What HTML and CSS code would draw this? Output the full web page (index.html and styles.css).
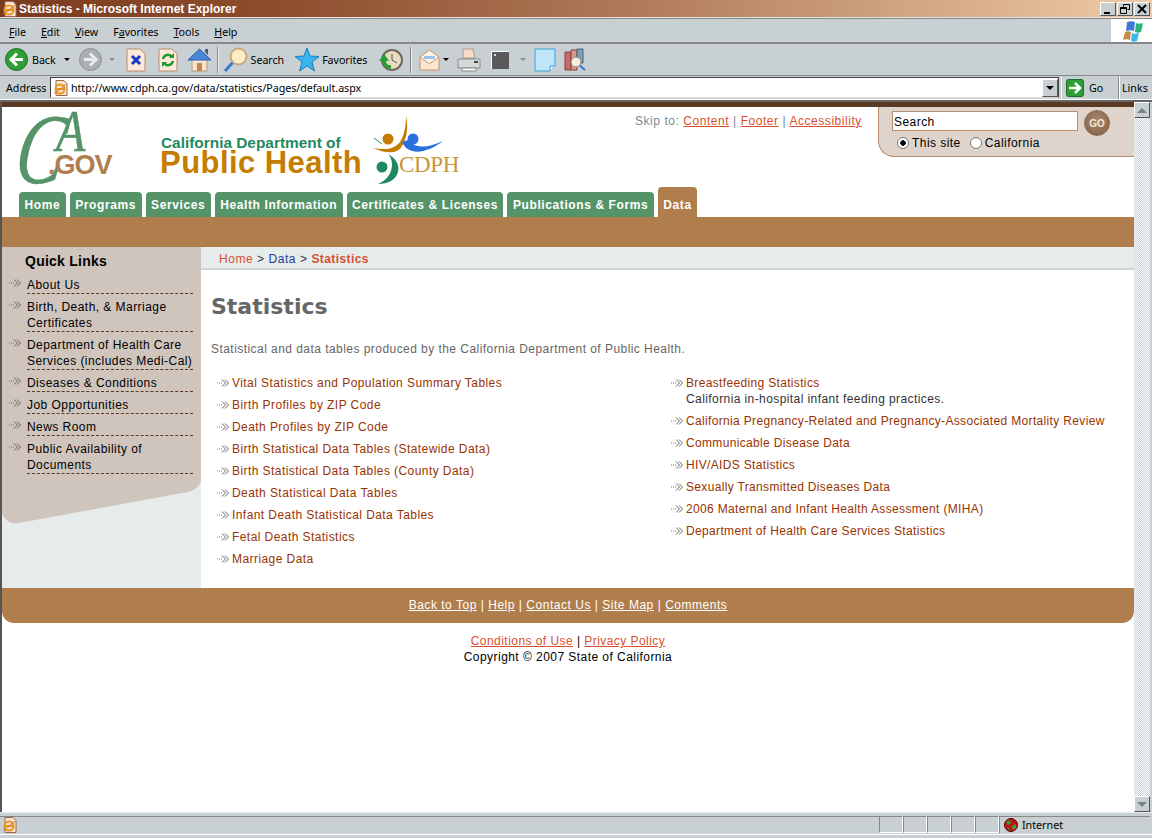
FILE: index.html
```html
<!DOCTYPE html>
<html lang="en">
<head>
  <meta charset="UTF-8" />
  <title>Statistics - Microsoft Internet Explorer</title>
  <link rel="stylesheet" href="styles.css">
</head>
<body>

  <svg class="defs" width="0" height="0">
    <symbol id="arr" viewBox="0 0 13 8">
      <path d="M0 4h1M2 4h1M4 4h1" stroke="#777" fill="none"/>
      <path d="M5 .5 8.500 4 5 7.500M8 .5 11.500 4 8 7.500" stroke="#666" fill="none"/>
    </symbol>
    <symbol id="ie" viewBox="0 0 16 16">
      <path d="M3 .5h8l3 3v12H3z" fill="#fbe3d3" stroke="#9a6a4a"/>
      <circle cx="7" cy="9" r="4.500" fill="none" stroke="#e8981e" stroke-width="2"/>
      <path d="M3 9h8" stroke="#e8981e" stroke-width="2"/>
      <path d="M1 13C4 12 10 7 13 4" stroke="#c9751a" fill="none"/>
    </symbol>
  </svg>

  <div class="titlebar">
    <svg width="16" height="16"><use href="#ie"/></svg>
    <span class="title-text">Statistics - Microsoft Internet Explorer</span>
    <div class="win-btns">
      <button class="win-btn"><svg width="10" height="10"><path d="M1 8h6v2H1z"/></svg></button>
      <button class="win-btn"><svg width="10" height="10"><path d="M3.500 2.500V.500h6v5h-2M.500 3.500h6v6h-6zM.500 4.500h6" fill="none" stroke="#000"/></svg></button>
      <button class="win-btn win-close"><svg width="10" height="10"><path d="M1 1l8 8M9 1l-8 8" stroke="#000" stroke-width="2"/></svg></button>
    </div>
  </div>

  <div class="menubar">
    <div class="menu-items">
      <span><u>F</u>ile</span>
      <span><u>E</u>dit</span>
      <span><u>V</u>iew</span>
      <span>F<u>a</u>vorites</span>
      <span><u>T</u>ools</span>
      <span><u>H</u>elp</span>
    </div>
    <div class="flag">
      <svg width="22" height="22" viewBox="0 0 22 22">
        <path d="M6 2C9 1 11 1 14 2L13 11C10 10 8 10 5 11z" fill="#3f78d8"/>
        <path d="M15 3C17 4 19 4 22 3L20 12C18 13 16 13 14 12z" fill="#2fb27a"/>
        <path d="M4 12C6 11 8 11 10 12L9 20C7 19 4 19 2 20z" fill="#c98a4a"/>
        <path d="M11 13C13 14 15 14 18 13L16 21C14 22 12 22 10 21z" fill="#37b8e8"/>
      </svg>
    </div>
  </div>

  <div class="toolbar">
    <svg class="ml5" width="23" height="23" viewBox="0 0 23 23">
      <circle cx="11.500" cy="11.500" r="11" fill="#2f9e35" stroke="#1c6f24"/>
      <path d="M18 11.500H7M12 5.500l-6 6 6 6" fill="none" stroke="#fff" stroke-width="3"/>
    </svg>
    <span class="ml4 tool-text">Back</span>
    <i class="caret ml8"></i>
    <svg class="ml9" width="23" height="23" viewBox="0 0 23 23">
      <circle cx="11.500" cy="11.500" r="11" fill="#aab0b2" stroke="#8a9092"/>
      <path d="M5 11.500h11M11 5.500l6 6-6 6" fill="none" stroke="#e8ecec" stroke-width="3"/>
    </svg>
    <i class="caret caret-off ml7"></i>
    <svg class="ml11" width="20" height="24" viewBox="0 0 20 24">
      <path d="M1 1h13l5 5v17H1z" fill="#fde9da" stroke="#b98a6a"/>
      <path d="M6 8l8 8M14 8l-8 8" stroke="#1836c8" stroke-width="3"/>
    </svg>
    <svg class="ml12" width="20" height="24" viewBox="0 0 20 24">
      <path d="M1 1h13l5 5v17H1z" fill="#fde9da" stroke="#b98a6a"/>
      <path d="M5 11a5 5 0 0 1 9-2M15 13a5 5 0 0 1-9 2" fill="none" stroke="#1f9a2f" stroke-width="2.500"/>
      <path d="M11 10h5V5zM9 14H4v5z" fill="#1f9a2f"/>
    </svg>
    <svg class="ml9" width="25" height="26" viewBox="0 0 25 26">
      <path d="M5 12v12h15V12z" fill="#f4e3cf" stroke="#b59a7c"/>
      <path d="M10 16h5v8h-5z" fill="#c8854a"/>
      <path d="M1 13 12.500 2 24 13z" fill="#4a86d8" stroke="#2d5ca8"/>
      <path d="M18 2h3v6l-3-3z" fill="#4a5a78"/>
    </svg>
    <i class="sep ml5"></i>
    <svg class="ml4" width="25" height="26" viewBox="0 0 25 26">
      <path d="M2 24l9-10" stroke="#3a78c8" stroke-width="3"/>
      <circle cx="15.500" cy="9.500" r="8" fill="#fbeec4" stroke="#c9a878" stroke-width="2"/>
    </svg>
    <span class="ml3 tool-text">Search</span>
    <svg class="ml11" width="24" height="25" viewBox="0 0 24 25">
      <path d="M12 1l3 8 9 .5-7 5.500 2.500 9-7.500-5-7.500 5L7 15 0 9.500 9 9z" fill="#38b4ee" stroke="#1a7cc0"/>
    </svg>
    <span class="ml3 tool-text">Favorites</span>
    <svg class="ml12" width="24" height="24" viewBox="0 0 24 24">
      <circle cx="13" cy="12" r="10" fill="#e8dcc0" stroke="#6a6a5a" stroke-width="2"/>
      <path d="M13 6v6l5 3" stroke="#555" fill="none"/>
      <path d="M5 12c0 4 3 7 7 7" stroke="#2a9e32" stroke-width="3.500" fill="none"/>
      <path d="M0 13h10L5 6z" fill="#2a9e32"/>
    </svg>
    <i class="sep ml7"></i>
    <svg class="ml7" width="21" height="24" viewBox="0 0 21 24">
      <path d="M1 9h19v13H1z" fill="#fbe6d0" stroke="#c8946a"/>
      <path d="M1 9l9.500-7L20 9l-9.500 7z" fill="#fdf3e8" stroke="#c8946a"/>
      <path d="M5 8h11v3H5z" fill="#9cc4e8"/>
    </svg>
    <i class="caret ml3"></i>
    <svg class="ml8" width="24" height="24" viewBox="0 0 24 24">
      <path d="M6 1h10l2 9H6z" fill="#f6dcc8" stroke="#a89888"/>
      <path d="M1 11h22v9H1z" fill="#d4d8d8" stroke="#858a8a"/>
      <path d="M5 20h14v3H5z" fill="#fafafa" stroke="#858a8a"/>
      <path d="M17 14h4" stroke="#444" stroke-width="2"/>
    </svg>
    <svg class="ml10" width="18" height="18" viewBox="0 0 18 18">
      <path d="M0 0h18v18H0z" fill="#5a5a5a"/>
      <path d="M0 0h18v1H1v17H0z" fill="#fff"/>
      <path d="M3 3h2v2H3z" fill="#ddd"/>
    </svg>
    <i class="caret caret-off ml11"></i>
    <svg class="ml8" width="22" height="24" viewBox="0 0 22 24">
      <path d="M1 1h20v17l-5 5H1z" fill="#bfe6f8" stroke="#3aa0d8"/>
      <path d="M16 23v-5h5" fill="#eaf6fc" stroke="#3aa0d8"/>
    </svg>
    <svg class="ml8" width="23" height="24" viewBox="0 0 23 24">
      <path d="M1 4h6v18H1z" fill="#c86a68" stroke="#84403e"/>
      <path d="M7 2h6v20H7z" fill="#d89a88" stroke="#84403e"/>
      <path d="M13 1h6v14h-6z" fill="#7aa0b8" stroke="#46607a"/>
      <path d="M14 16l7 6" stroke="#3a78c8" stroke-width="2"/>
      <circle cx="12" cy="14" r="5" fill="#f6eed8" stroke="#888"/>
    </svg>
  </div>

  <div class="addressbar">
    <span class="addr-label">Address</span>
    <div class="addr-box">
      <svg width="16" height="16"><use href="#ie"/></svg>
      <span class="addr-url">http://www.cdph.ca.gov/data/statistics/Pages/default.aspx</span>
      <button class="addr-drop"><i class="caret caret-dark"></i></button>
    </div>
    <div class="addr-go">
      <svg width="18" height="18" viewBox="0 0 18 18">
        <rect x=".5" y=".5" width="17" height="17" rx="2" fill="#2f9e35" stroke="#1c6f24"/>
        <path d="M3 9h10M9 4l5 5-5 5" fill="none" stroke="#fff" stroke-width="2.500"/>
      </svg>
      <span>Go</span>
    </div>
    <div class="addr-links">Links</div>
  </div>

  <div class="browser">
    <div class="page">
      <div class="top-strip"></div>

      <header class="site-header">
        <div class="ca-logo">
          <span class="ca-c">C</span>
          <span class="ca-a">A</span>
          <span class="ca-gov"><b>.</b>GOV</span>
        </div>
        <div class="dept-logo">
          <div class="dept-small">California Department of</div>
          <div class="dept-big">Public Health</div>
        </div>
        <svg class="cdph-logo" width="90" height="74" viewBox="0 0 90 74">
          <circle cx="16" cy="27" r="5.500" fill="#c47d00"/>
          <path d="M1 36C12 38 22 38 28 30 33 22 34 12 34 4 36 14 36 24 30 34 26 42 14 42 1 36Z" fill="#c47d00"/>
          <path d="M2 26l8 6" stroke="#1f8a5f"/>
          <circle cx="41" cy="27" r="5.500" fill="#2a6fe0"/>
          <path d="M30 30C36 44 54 42 71 29 56 36 44 37 36 28Z" fill="#2a6fe0"/>
          <circle cx="10" cy="55" r="5.500" fill="#1f8a5f"/>
          <path d="M6 72C16 68 20 60 20 52 20 48 18 44 16 42 24 46 28 54 26 60 24 68 16 72 6 72Z" fill="#1f8a5f"/>
          <text x="27" y="60" class="cdph-text">CDPH</text>
        </svg>
        <div class="skip">Skip to: <a>Content</a> | <a>Footer</a> | <a>Accessibility</a></div>
        <form class="search-box">
          <div class="search-row">
            <input class="search-input" type="text" value="Search" />
            <button class="go-btn" type="button">GO</button>
          </div>
          <div class="radio-row">
            <label><input type="radio" name="scope" checked /> This site</label>
            <label><input type="radio" name="scope" /> California</label>
          </div>
        </form>
      </header>

      <nav class="tabs">
        <a class="tab">Home</a>
        <a class="tab">Programs</a>
        <a class="tab">Services</a>
        <a class="tab">Health Information</a>
        <a class="tab">Certificates &amp; Licenses</a>
        <a class="tab">Publications &amp; Forms</a>
        <a class="tab tab-active">Data</a>
      </nav>
      <div class="brown-band"></div>

      <div class="columns">
        <aside class="sidebar">
          <div class="quick">
            <h3>Quick Links</h3>
            <ul>
              <li><svg width="13" height="8"><use href="#arr"/></svg><span>About Us</span></li>
              <li><svg width="13" height="8"><use href="#arr"/></svg><span>Birth, Death, &amp; Marriage Certificates</span></li>
              <li><svg width="13" height="8"><use href="#arr"/></svg><span>Department of Health Care Services (includes Medi-Cal)</span></li>
              <li><svg width="13" height="8"><use href="#arr"/></svg><span>Diseases &amp; Conditions</span></li>
              <li><svg width="13" height="8"><use href="#arr"/></svg><span>Job Opportunities</span></li>
              <li><svg width="13" height="8"><use href="#arr"/></svg><span>News Room</span></li>
              <li><svg width="13" height="8"><use href="#arr"/></svg><span>Public Availability of Documents</span></li>
            </ul>
          </div>
          <svg class="quick-foot" width="199" height="50" viewBox="0 0 199 50">
            <path d="M0 0H199V5C199 11 194 16 186 18L17 49C9 51 3 46 0 40Z" fill="#cfc5bd"/>
          </svg>
        </aside>

        <main class="content">
          <div class="crumbs"><a class="red">Home</a> &gt; <a class="blue">Data</a> &gt; <b class="red">Statistics</b></div>
          <h1>Statistics</h1>
          <p class="intro">Statistical and data tables produced by the California Department of Public Health.</p>
          <div class="lists">
            <ul class="links">
              <li><svg width="13" height="8"><use href="#arr"/></svg><a>Vital Statistics and Population Summary Tables</a></li>
              <li><svg width="13" height="8"><use href="#arr"/></svg><a>Birth Profiles by ZIP Code</a></li>
              <li><svg width="13" height="8"><use href="#arr"/></svg><a>Death Profiles by ZIP Code</a></li>
              <li><svg width="13" height="8"><use href="#arr"/></svg><a>Birth Statistical Data Tables (Statewide Data)</a></li>
              <li><svg width="13" height="8"><use href="#arr"/></svg><a>Birth Statistical Data Tables (County Data)</a></li>
              <li><svg width="13" height="8"><use href="#arr"/></svg><a>Death Statistical Data Tables</a></li>
              <li><svg width="13" height="8"><use href="#arr"/></svg><a>Infant Death Statistical Data Tables</a></li>
              <li><svg width="13" height="8"><use href="#arr"/></svg><a>Fetal Death Statistics</a></li>
              <li><svg width="13" height="8"><use href="#arr"/></svg><a>Marriage Data</a></li>
            </ul>
            <ul class="links links-right">
              <li><svg width="13" height="8"><use href="#arr"/></svg><div><a>Breastfeeding Statistics</a><br><span class="note">California in-hospital infant feeding practices.</span></div></li>
              <li><svg width="13" height="8"><use href="#arr"/></svg><a>California Pregnancy-Related and Pregnancy-Associated Mortality Review</a></li>
              <li><svg width="13" height="8"><use href="#arr"/></svg><a>Communicable Disease Data</a></li>
              <li><svg width="13" height="8"><use href="#arr"/></svg><a>HIV/AIDS Statistics</a></li>
              <li><svg width="13" height="8"><use href="#arr"/></svg><a>Sexually Transmitted Diseases Data</a></li>
              <li><svg width="13" height="8"><use href="#arr"/></svg><a>2006 Maternal and Infant Health Assessment (MIHA)</a></li>
              <li><svg width="13" height="8"><use href="#arr"/></svg><a>Department of Health Care Services Statistics</a></li>
            </ul>
          </div>
        </main>
      </div>

      <footer class="site-footer">
        <a>Back to Top</a> | <a>Help</a> | <a>Contact Us</a> | <a>Site Map</a> | <a>Comments</a>
      </footer>
      <div class="legal">
        <a>Conditions of Use</a> | <a>Privacy Policy</a><br>
        Copyright © 2007 State of California
      </div>
    </div>

    <div class="scrollbar">
      <button class="scroll-btn"><i class="tri-up"></i></button>
      <div class="scroll-track"></div>
      <button class="scroll-btn"><i class="tri-down"></i></button>
    </div>
  </div>

  <div class="statusbar">
    <div class="status-main"><svg width="16" height="16"><use href="#ie"/></svg></div>
    <div class="status-cell"></div>
    <div class="status-cell"></div>
    <div class="status-cell"></div>
    <div class="status-cell"></div>
    <div class="status-cell"></div>
    <div class="status-zone">
      <svg width="14" height="14" viewBox="0 0 14 14">
        <circle cx="7" cy="7" r="6.500" fill="#c41414" stroke="#401010"/>
        <path d="M2 4l3-2 2 3-3 2zM8 8l4-2 0 4-3 2zM3 10l2 0 0 2z" fill="#2aa83a"/>
      </svg>
      <span>Internet</span>
    </div>
  </div>

</body>
</html>
```

FILE: styles.css
```css
* { margin: 0; padding: 0; box-sizing: border-box; }
html, body { height: 100%; }
body {
  width: 1152px; height: 838px;
  overflow: hidden;
  display: flex; flex-direction: column;
  background-color: #c8d0d3;
  font-family: "Noto Sans", sans-serif;
  font-size: 10.7px;
  color: #000;
}
ul { list-style: none; }
svg { display: block; flex-shrink: 0; }
.defs { position: absolute; }

/* Window chrome */
.titlebar {
  height: 18px;
  display: flex; align-items: center;
  padding-left: 2px;
  background: linear-gradient(90deg, #7a3a1e 0%, #8e4f2f 25%, #b07a58 55%, #efcaa8 100%);
  border-bottom: 1px solid #e4e4e4;
}
.title-text {
  margin-left: 1px;
  color: #fff;
  font-family: "Liberation Sans", sans-serif;
  font-weight: bold;
  font-size: 12px;
}
.win-btns { margin-left: auto; margin-right: 2px; display: flex; gap: 1px; }
.win-btn {
  width: 16px; height: 14px;
  display: flex; align-items: center; justify-content: center;
  background-color: #c8d0d3;
  border: 1px solid;
  border-color: #fff #555 #555 #fff;
}

.menubar {
  height: 26px;
  display: flex;
  border-bottom: 2px solid #888;
  border-top: 1px solid #888;
}
.menu-items {
  display: flex; align-items: center; gap: 15px;
  padding: 3px 0 0 9px;
  flex: 1;
  letter-spacing: -.04px;
}
.flag {
  width: 41px;
  background-color: #fff;
  display: flex; align-items: center; justify-content: center;
}

.toolbar {
  height: 32px;
  display: flex; align-items: center;
  border-bottom: 1px solid #888;
}
.tool-text { letter-spacing: -.05px; }
.ml3 { margin-left: 3px; }
.ml4 { margin-left: 4px; }
.ml5 { margin-left: 5px; }
.ml7 { margin-left: 7px; }
.ml8 { margin-left: 8px; }
.ml9 { margin-left: 9px; }
.ml10 { margin-left: 10px; }
.ml11 { margin-left: 11px; }
.ml12 { margin-left: 12px; }
.caret {
  display: block;
  width: 0; height: 0;
  border-left: 3px solid transparent;
  border-right: 3px solid transparent;
  border-top: 3px solid #000;
}
.caret-off { border-top-color: #8a8f92; }
.sep {
  display: block;
  width: 2px; height: 26px;
  background-color: #888;
  border-right: 1px solid #eee;
}

.addressbar {
  height: 24px;
  display: flex; align-items: center;
  border-bottom: 1px solid #fff;
}
.addr-label { margin-left: 6px; width: 44px; }
.addr-box {
  width: 1009px; height: 21px;
  background-color: #fff;
  border: 1px solid;
  border-color: #444 #444 #ddd #444;
  display: flex; align-items: center;
  padding-left: 2px;
}
.addr-url { margin-left: 2px; flex: 1; letter-spacing: -.05px; }
.addr-drop {
  width: 16px; height: 18px;
  display: flex; align-items: center; justify-content: center;
  background-color: #c8d0d3;
  border: 1px solid;
  border-color: #fff #555 #555 #fff;
}
.caret-dark { border-left-width: 4px; border-right-width: 4px; border-top-width: 4px; }
.addr-go {
  margin-left: 2px;
  width: 58px; height: 22px;
  display: flex; align-items: center; gap: 5px;
  padding-left: 4px;
  border-left: 1px solid #fff;
  border-right: 1px solid #888;
}
.addr-links { padding-left: 2px; border-left: 1px solid #fff; height: 22px; line-height: 22px; }

.browser {
  flex: 1;
  display: flex;
  padding-right: 2px;
  border-top: 2px solid #666;
  min-height: 0;
}
.page {
  flex: 1;
  margin-left: 2px;
  background-color: #fff;
  font-family: "Liberation Sans", sans-serif;
  font-size: 12px;
  letter-spacing: .45px;
  box-shadow: -2px 0 0 #555;
  min-width: 0;
}
.scrollbar { width: 16px; display: flex; flex-direction: column; }
.scroll-btn {
  height: 16px;
  display: flex; align-items: center; justify-content: center;
  background-color: #c8d0d3;
  border: 1px solid;
  border-color: #fff #555 #555 #fff;
}
.scroll-track {
  flex: 1;
  background: repeating-conic-gradient(#c8d0d3 0 25%, #fff 0 50%) 0 0 / 2px 2px;
}
.tri-up, .tri-down {
  display: block; width: 0; height: 0;
  border-left: 5px solid transparent;
  border-right: 5px solid transparent;
}
.tri-up { border-bottom: 5px solid #7a8084; }
.tri-down { border-top: 5px solid #7a8084; }

.statusbar {
  height: 26px;
  display: flex; align-items: stretch;
  padding: 3px 2px 5px 0;
  border-top: 1px solid #e8ecec;
  box-shadow: inset 0 -3px 0 #c8d0d3, inset 0 -4px 0 #fff;
}
.status-main {
  flex: 1;
  padding-left: 2px;
  display: flex; align-items: center;
  border-top: 1px solid #888;
}
.status-cell {
  width: 24px;
  border: 1px solid;
  border-color: #888 #fff #fff #888;
}
.status-zone {
  width: 151px;
  display: flex; align-items: center; gap: 4px;
  padding-left: 4px;
  border-left: 1px solid #888;
  border-top: 1px solid #888;
}

/* Header of the site */
.top-strip { height: 5px; background-color: #5a3a22; }
.site-header { height: 80px; display: flex; position: relative; }
.ca-logo { width: 158px; position: relative; }
.ca-c, .ca-a {
  position: absolute;
  font-family: "Liberation Serif", serif;
  font-style: italic;
  color: #559468;
  line-height: 1;
  transform-origin: left bottom;
  -webkit-text-stroke: .5px #559468;
}
.ca-c { left: 8px; top: -7px; font-size: 100px; transform: scaleX(.72) skewX(-12deg); }
.ca-a { left: 54px; top: -6px; font-size: 60px; transform: scaleX(.8); }
.ca-gov {
  position: absolute; left: 46px; top: 43px;
  font-family: "Liberation Sans", sans-serif;
  font-weight: bold;
  font-size: 27px;
  letter-spacing: -1px;
  color: #b07d4c;
}
.dept-logo { width: 212px; padding-top: 28px; font-family: "Liberation Sans", sans-serif; font-weight: bold; letter-spacing: 0; }
.dept-small { font-size: 15.4px; line-height: 15px; color: #1f8a5f; padding-left: 1px; }
.dept-big { font-size: 31px; line-height: 26px; letter-spacing: .45px; color: #c47d00; }
.cdph-logo { margin-top: 5px; }
.cdph-text { font-family: "Liberation Serif", serif; font-size: 23px; fill: #c9953a; letter-spacing: -.3px; }
.skip { position: absolute; left: 633px; top: 7px; color: #7f8a8f; letter-spacing: .55px; }
.skip a { color: #d9502f; text-decoration: underline; }
.search-box {
  margin-left: auto;
  width: 256px; height: 50px;
  background-color: #ded4cb;
  border-left: 1px solid #b98f70;
  border-bottom: 1px solid #b98f70;
  border-bottom-left-radius: 16px;
  padding: 4px 0 0 13px;
}
.search-row { display: flex; align-items: flex-start; }
.search-input {
  width: 186px; height: 20px;
  padding: 2px 0 0 1px;
  border: 1px solid #b98f70;
  font-family: "Liberation Sans", sans-serif;
  font-size: 12px;
  letter-spacing: .45px;
}
.go-btn {
  margin-left: 6px; margin-top: -1px;
  width: 26px; height: 26px;
  border: 1px solid #8a6a50;
  border-radius: 50%;
  background: radial-gradient(circle at 50% 40%, #a98a70, #7f5c42);
  color: #f2e6da;
  font-family: "Liberation Sans", sans-serif;
  font-weight: bold;
  font-size: 10px;
}
.radio-row { display: flex; gap: 9px; padding-left: 5px; }
.radio-row label { display: flex; align-items: center; gap: 3px; }
.radio-row input {
  appearance: none;
  width: 12px; height: 12px;
  border-radius: 50%;
  border: 1px solid #777;
  background-color: #fff;
}
.radio-row input:checked { background: radial-gradient(circle, #000 0 2.500px, #fff 3px); }

/* Tabs */
.tabs {
  height: 30px;
  padding-left: 17px;
  display: flex; align-items: flex-end; gap: 4px;
}
.tab {
  height: 25px; line-height: 26px;
  padding: 0 5.5px;
  background-color: #559468;
  border-radius: 4px 4px 0 0;
  color: #fff;
  font-weight: bold;
  letter-spacing: .6px;
}
.tab-active { height: 30px; line-height: 36px; background-color: #b07d4c; }
.brown-band { height: 30px; background-color: #b07d4c; }

/* Columns */
.columns { display: flex; height: 341px; }
.sidebar { width: 199px; background-color: #e6ecec; }
.quick { background-color: #cfc5bd; padding: 6px 8px 0 7px; height: 228px; }
.quick h3 { font-size: 14px; line-height: 16px; letter-spacing: .25px; padding-left: 16px; margin-bottom: 8px; color: #000; }
.quick li {
  display: flex; gap: 5px;
  margin-bottom: 5px;
  line-height: 16px;
}
.quick li svg { margin-top: 2px; }
.quick li span { flex: 1; border-bottom: 1px dashed #5a3a22; }
.quick-foot { margin-top: -1px; }

.content { flex: 1; }
.crumbs {
  height: 23px; line-height: 25px;
  padding-left: 18px;
  background-color: #e6ecec;
  border-bottom: 2px solid #d0d4d6;
  color: #333;
  letter-spacing: .55px;
}
.crumbs b { letter-spacing: .4px; }
.red { color: #d9502f; }
.blue { color: #1f3f99; }
.content h1 {
  margin: 24px 0 0 10px;
  font-family: "DejaVu Sans", sans-serif;
  font-size: 22px;
  line-height: 26px;
  letter-spacing: 0;
  color: #666;
}
.intro { margin: 21px 0 0 10px; line-height: 16px; color: #666; }
.lists { display: flex; margin: 18px 0 0 16px; }
.links { width: 454px; letter-spacing: .43px; }
.links-right { letter-spacing: .34px; }
.links li { display: flex; gap: 2px; margin-bottom: 6px; line-height: 16px; color: #333; }
.links li svg { margin-top: 4px; }
.links a { color: #993300; }
.note { letter-spacing: .41px; }

.site-footer {
  height: 35px; line-height: 35px;
  text-align: center;
  background-color: #b07d4c;
  border-radius: 0 0 12px 12px;
  color: #fff;
  letter-spacing: .52px;
}
.site-footer a { text-decoration: underline; }
.legal { margin-top: 10px; text-align: center; line-height: 16px; }
.legal a { color: #d9502f; text-decoration: underline; }
```
